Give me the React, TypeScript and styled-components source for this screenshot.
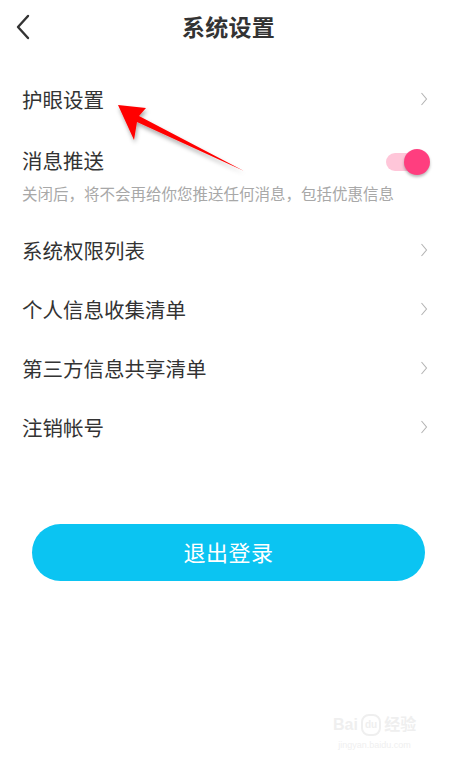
import React from "react";
import styled, { createGlobalStyle } from "styled-components";

const GlobalStyle = createGlobalStyle`
  html, body {
    margin: 0;
    padding: 0;
    background: #ffffff;
  }
  body {
    font-family: "Noto Sans CJK SC", "Noto Sans", sans-serif;
  }
`;

const MENU_ROWS = ["系统权限列表", "个人信息收集清单", "第三方信息共享清单", "注销帐号"];

const Chevron = () => (
  <svg width="8" height="14" viewBox="0 0 8 14">
    <polyline
      points="1.5,1 6.5,7 1.5,13"
      fill="none"
      stroke="#b4b4b4"
      strokeWidth="1.1"
    />
  </svg>
);

const BackIcon = () => (
  <svg width="16" height="26" viewBox="0 0 16 26">
    <polyline
      points="13,2 3,13 13,24"
      fill="none"
      stroke="#333333"
      strokeWidth="2.4"
      strokeLinecap="round"
      strokeLinejoin="round"
    />
  </svg>
);

const Arrow = () => (
  <ArrowLayer width="140" height="80" viewBox="0 0 140 80">
    <defs>
      <filter id="shade" x="-20%" y="-20%" width="140%" height="160%">
        <feDropShadow dx="1" dy="3" stdDeviation="2" floodColor="#000" floodOpacity="0.35" />
      </filter>
    </defs>
    <polygon
      points="0,0 28,3 21,11 126,66 19,17 16,35"
      fill="#ff0000"
      filter="url(#shade)"
    />
  </ArrowLayer>
);

export default function App() {
  return (
    <Page>
      <GlobalStyle />
      <Header>
        <BackButton>
          <BackIcon />
        </BackButton>
        <Title>系统设置</Title>
      </Header>

      <List>
        <Row>
          <RowLabel>护眼设置</RowLabel>
          <Chevron />
        </Row>

        <PushBlock>
          <PushLine>
            <RowLabel>消息推送</RowLabel>
            <Toggle>
              <Knob />
            </Toggle>
          </PushLine>
          <Hint>关闭后，将不会再给你您推送任何消息，包括优惠信息</Hint>
        </PushBlock>

        {MENU_ROWS.map((label) => (
          <Row key={label}>
            <RowLabel>{label}</RowLabel>
            <Chevron />
          </Row>
        ))}
      </List>

      <LogoutButton>退出登录</LogoutButton>

      <Arrow />

      <Watermark>
        <MarkTop>
          <span>Bai</span>
          <MarkPaw>du</MarkPaw>
          <span>经验</span>
        </MarkTop>
        <MarkUrl>jingyan.baidu.com</MarkUrl>
      </Watermark>
    </Page>
  );
}

const Page = styled.div`
  position: relative;
  width: 450px;
  height: 760px;
  overflow: hidden;
  background: #ffffff;
  color: #333333;
`;

const Header = styled.header`
  position: relative;
  height: 57px;
  display: flex;
  align-items: center;
  justify-content: center;
  padding-left: 7px;
  box-sizing: border-box;
  padding-bottom: 5px;
`;

const BackButton = styled.div`
  position: absolute;
  left: 15px;
  top: 14px;
  display: flex;
`;

const Title = styled.h1`
  margin: 0;
  font-size: 23px;
  line-height: 30px;
  font-weight: 700;
  color: #333333;
  letter-spacing: 0.3px;
`;

const List = styled.div`
  padding: 12px 22px 0 22px;
`;

const Row = styled.div`
  height: 59px;
  display: flex;
  align-items: center;
  justify-content: space-between;
`;

const RowLabel = styled.span`
  font-size: 20.5px;
  line-height: 26px;
  color: #333333;
`;

const PushBlock = styled.div`
  padding: 19px 0 17px;
`;

const PushLine = styled.div`
  display: flex;
  align-items: center;
  justify-content: space-between;
  height: 26px;
`;

const Toggle = styled.div`
  position: relative;
  width: 42px;
  height: 18px;
  margin-top: 4px;
  border-radius: 9px;
  background: #ffc6d9;
`;

const Knob = styled.div`
  position: absolute;
  right: -2px;
  top: -4px;
  width: 26px;
  height: 26px;
  border-radius: 50%;
  background: #ff3e7f;
  box-shadow: 0 2px 3px rgba(0, 0, 0, 0.28);
`;

const Hint = styled.p`
  margin: 10px 0 0;
  font-size: 15.5px;
  line-height: 20px;
  color: #a8a8a8;
  white-space: nowrap;
`;

const LogoutButton = styled.div`
  margin: 68px 25px 0 32px;
  height: 57px;
  border-radius: 29px;
  background: #0bc4f2;
  color: #ffffff;
  font-size: 22px;
  display: flex;
  align-items: center;
  justify-content: center;
  letter-spacing: 0.5px;
  padding-bottom: 3px;
  box-sizing: border-box;
`;

const ArrowLayer = styled.svg`
  position: absolute;
  left: 118px;
  top: 105px;
  overflow: visible;
`;

const Watermark = styled.div`
  position: absolute;
  left: 333px;
  top: 714px;
  display: flex;
  flex-direction: column;
  align-items: center;
  color: #efefef;
  font-family: "Liberation Sans", "Noto Sans CJK SC", sans-serif;
  font-weight: 700;
`;

const MarkTop = styled.div`
  display: flex;
  align-items: center;
  font-size: 16px;
  line-height: 18px;
`;

const MarkPaw = styled.span`
  font-size: 10px;
  margin: 0 3px;
  padding: 0 2px;
  border: 2px solid #efefef;
  border-radius: 8px;
`;

const MarkUrl = styled.div`
  margin-top: 4px;
  font-size: 9px;
  font-weight: 400;
`;
